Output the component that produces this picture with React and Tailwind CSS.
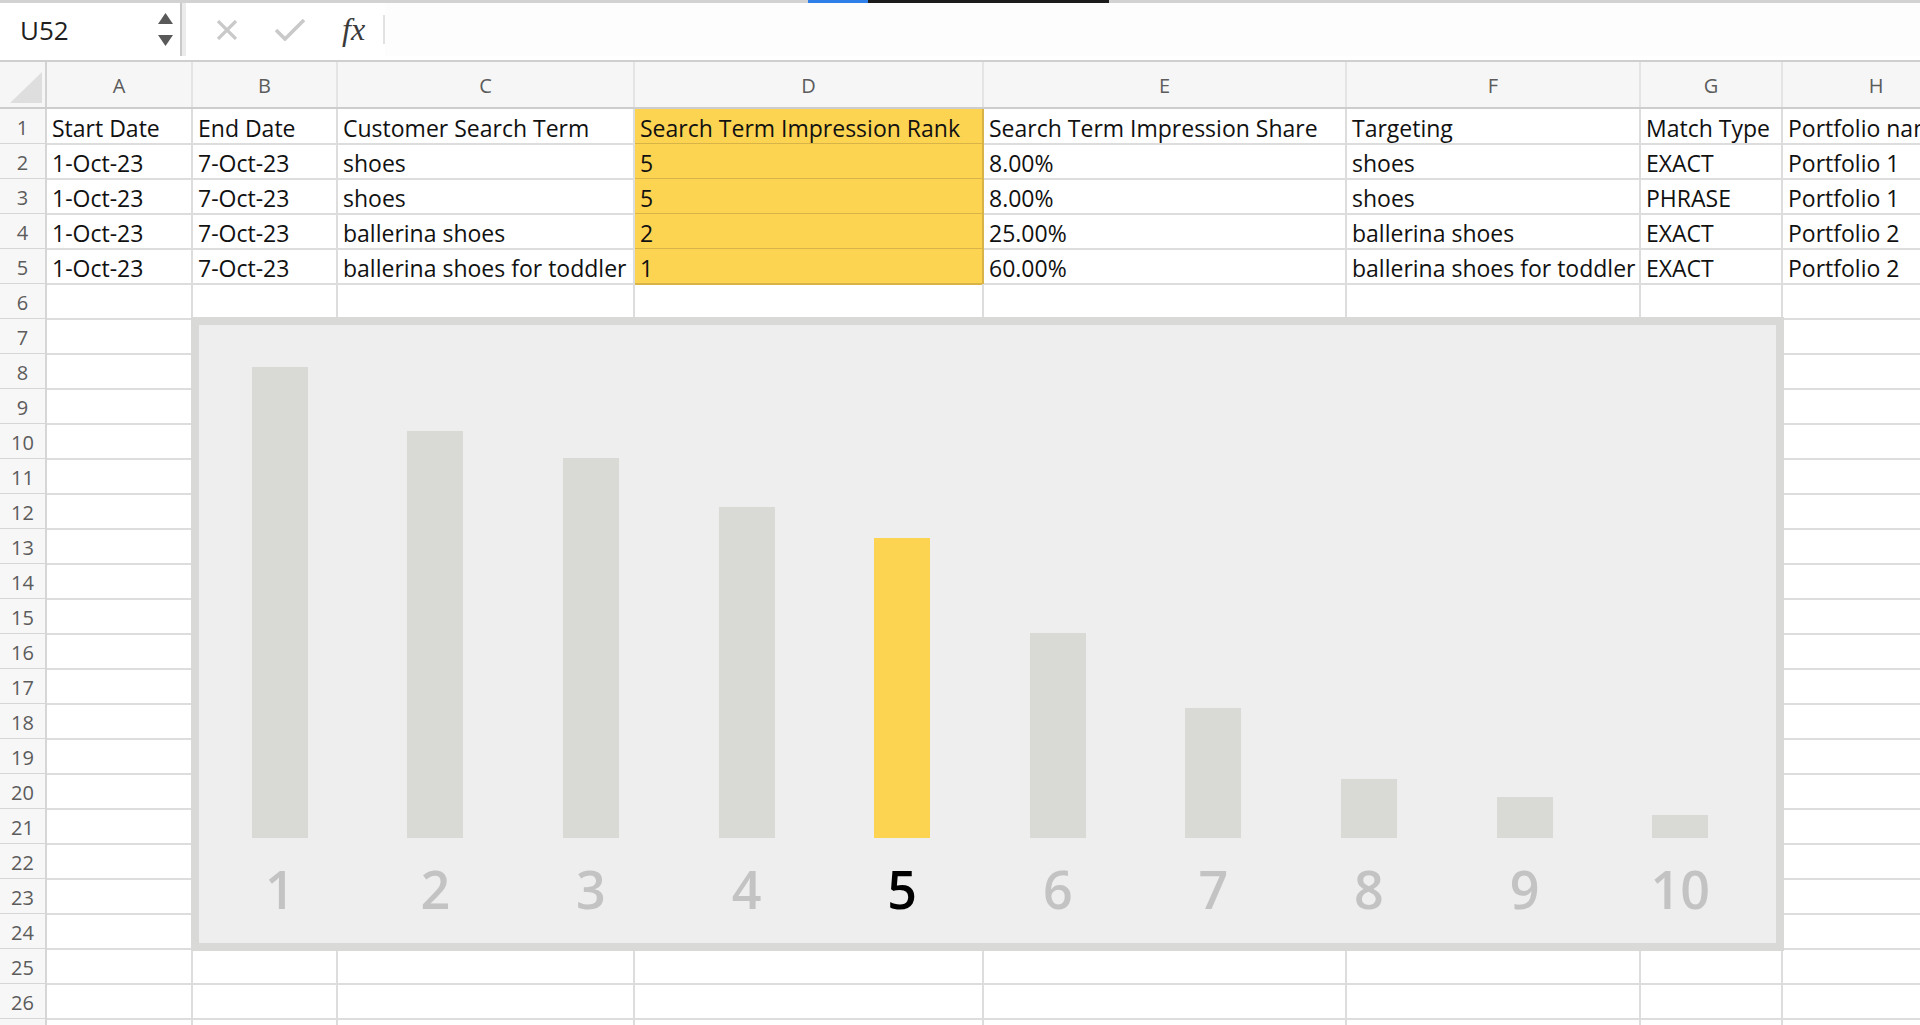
import React from 'react'

const COLS = ['A', 'B', 'C', 'D', 'E', 'F', 'G', 'H']

const ROWS = [
  ['Start Date', 'End Date', 'Customer Search Term', 'Search Term Impression Rank', 'Search Term Impression Share', 'Targeting', 'Match Type', 'Portfolio name'],
  ['1-Oct-23', '7-Oct-23', 'shoes', '5', '8.00%', 'shoes', 'EXACT', 'Portfolio 1'],
  ['1-Oct-23', '7-Oct-23', 'shoes', '5', '8.00%', 'shoes', 'PHRASE', 'Portfolio 1'],
  ['1-Oct-23', '7-Oct-23', 'ballerina shoes', '2', '25.00%', 'ballerina shoes', 'EXACT', 'Portfolio 2'],
  ['1-Oct-23', '7-Oct-23', 'ballerina shoes for toddler', '1', '60.00%', 'ballerina shoes for toddler', 'EXACT', 'Portfolio 2'],
]

// bar heights in px, rank 1..10
const BARS = [471, 407, 380, 331, 300, 205, 130, 59, 41, 23]
const ACTIVE_RANK = 5

const GRID = 'grid grid-cols-[47px_146px_145px_297px_349px_363px_294px_142px_188px]'
const FONT = { fontFamily: '"Open Sans", "Noto Sans", sans-serif' }

function FormulaBar() {
  return (
    <div className="relative h-[56px] flex items-stretch bg-white border-t-[3px] border-[#d2d2d2]">
      {/* window top strip */}
      <div className="absolute -top-[3px] left-[808px] w-[60px] h-[3px] bg-[#2f7fe8]" />
      <div className="absolute -top-[3px] left-[868px] w-[241px] h-[3px] bg-[#1c1c1c]" />

      {/* Name box */}
      <div className="w-[180px] flex items-center justify-between pl-[20px] pr-[7px]">
        <span className="text-[26px] text-[#1f1f1f] leading-none">U52</span>
        <div className="flex flex-col gap-[11px]">
          <svg width="15" height="11" viewBox="0 0 15 11"><path d="M7.5 0 L15 11 L0 11 Z" fill="#595959" /></svg>
          <svg width="15" height="11" viewBox="0 0 15 11"><path d="M0 0 L15 0 L7.5 11 Z" fill="#595959" /></svg>
        </div>
      </div>
      <div className="w-[6px] border-l-2 border-[#c9c9c9] bg-[#ececec]" />

      {/* Formula buttons */}
      <div className="flex items-center pl-[30px] gap-[37px]">
        <svg width="22" height="20" viewBox="0 0 22 20">
          <path d="M2 1 L20 19 M20 1 L2 19" stroke="#c9c9c9" strokeWidth="3.2" fill="none" />
        </svg>
        <svg width="30" height="22" viewBox="0 0 30 22">
          <path d="M1 11 L10 20 L29 1" stroke="#c9c9c9" strokeWidth="3.6" fill="none" />
        </svg>
        <span className="text-[32px] italic text-[#3a3a3a] leading-none -mt-[2px]" style={{ fontFamily: '"Liberation Serif", serif' }}>
          fx
        </span>
      </div>
      <div className="ml-[18px] my-[12px] w-[2px] bg-[#e2e2e2]" />
      <div className="flex-1 bg-[#fdfdfd]" />
    </div>
  )
}

function HeaderRow() {
  return (
    <div className={`${GRID} h-[47px] bg-[#f6f6f6] border-b-2 border-[#cdcdcd]`}>
      <div className="relative border-r-2 border-[#d2d2d2]">
        <svg className="absolute left-[10px] top-[10px]" width="32" height="31" viewBox="0 0 32 31">
          <path d="M32 0 L32 31 L0 31 Z" fill="#dedede" />
        </svg>
      </div>
      {COLS.map((c) => (
        <div key={c} className="flex items-center justify-center pt-[3px] border-r-2 border-[#e4e4e4] text-[20px] text-[#5c5c5c]">
          {c}
        </div>
      ))}
    </div>
  )
}

function SheetRow({ n, cells }) {
  return (
    <div className={`${GRID} h-[35px]`}>
      <div className="flex justify-center pt-[4px] leading-[30px] text-[20px] text-[#5c5c5c] bg-[#f7f7f7] border-r-2 border-b-2 border-[#d6d6d6]">
        {n}
      </div>
      {COLS.map((c, i) => {
        const yellow = c === 'D' && cells
        return (
          <div
            key={c}
            className={`overflow-hidden whitespace-nowrap pl-[5px] pt-[4px] leading-[30px] text-[23px] text-[#111] border-r-2 border-b-2 ${
              yellow ? 'bg-[#fdd452] border-[#d8b448]' : 'border-[#dddddd]'
            }`}
          >
            {cells ? cells[i] : ''}
          </div>
        )
      })}
    </div>
  )
}

function RankChart() {
  return (
    <div className="absolute left-[191px] top-[317px] w-[1593px] h-[634px] border-8 border-[#d9d9d7] bg-[#eeeeee]">
      <div className="h-[513px] flex items-end pl-[3px]">
        {BARS.map((h, i) => (
          <div key={i} className="w-[155.6px] flex justify-center">
            <div
              className={`w-[56px] ${i + 1 === ACTIVE_RANK ? 'bg-[#fdd352]' : 'bg-[#d9d9d5]'}`}
              style={{ height: h }}
            />
          </div>
        ))}
      </div>
      <div className="mt-[25px] flex pl-[3px]">
        {BARS.map((_, i) => (
          <div
            key={i}
            className={`w-[155.6px] text-center text-[52px] leading-[52px] font-semibold ${
              i + 1 === ACTIVE_RANK ? 'text-black' : 'text-[#c3c3c3]'
            }`}
          >
            {i + 1}
          </div>
        ))}
      </div>
    </div>
  )
}

export default function App() {
  const rows = Array.from({ length: 26 }, (_, i) => i + 1)

  return (
    <div className="relative w-[1920px] h-[1025px] overflow-hidden bg-white" style={FONT}>
      <FormulaBar />
      {/* double separator under formula bar */}
      <div className="h-[6px] border-b-2 border-[#cfcfcf] bg-white" />

      <HeaderRow />
      {rows.map((n) => (
        <SheetRow key={n} n={n} cells={ROWS[n - 1]} />
      ))}
      <div className={`${GRID} h-[35px]`}>
        <div className="bg-[#f7f7f7] border-r-2 border-[#d6d6d6]" />
        {COLS.map((c) => (
          <div key={c} className="border-r-2 border-[#dddddd]" />
        ))}
      </div>

      <RankChart />
    </div>
  )
}
